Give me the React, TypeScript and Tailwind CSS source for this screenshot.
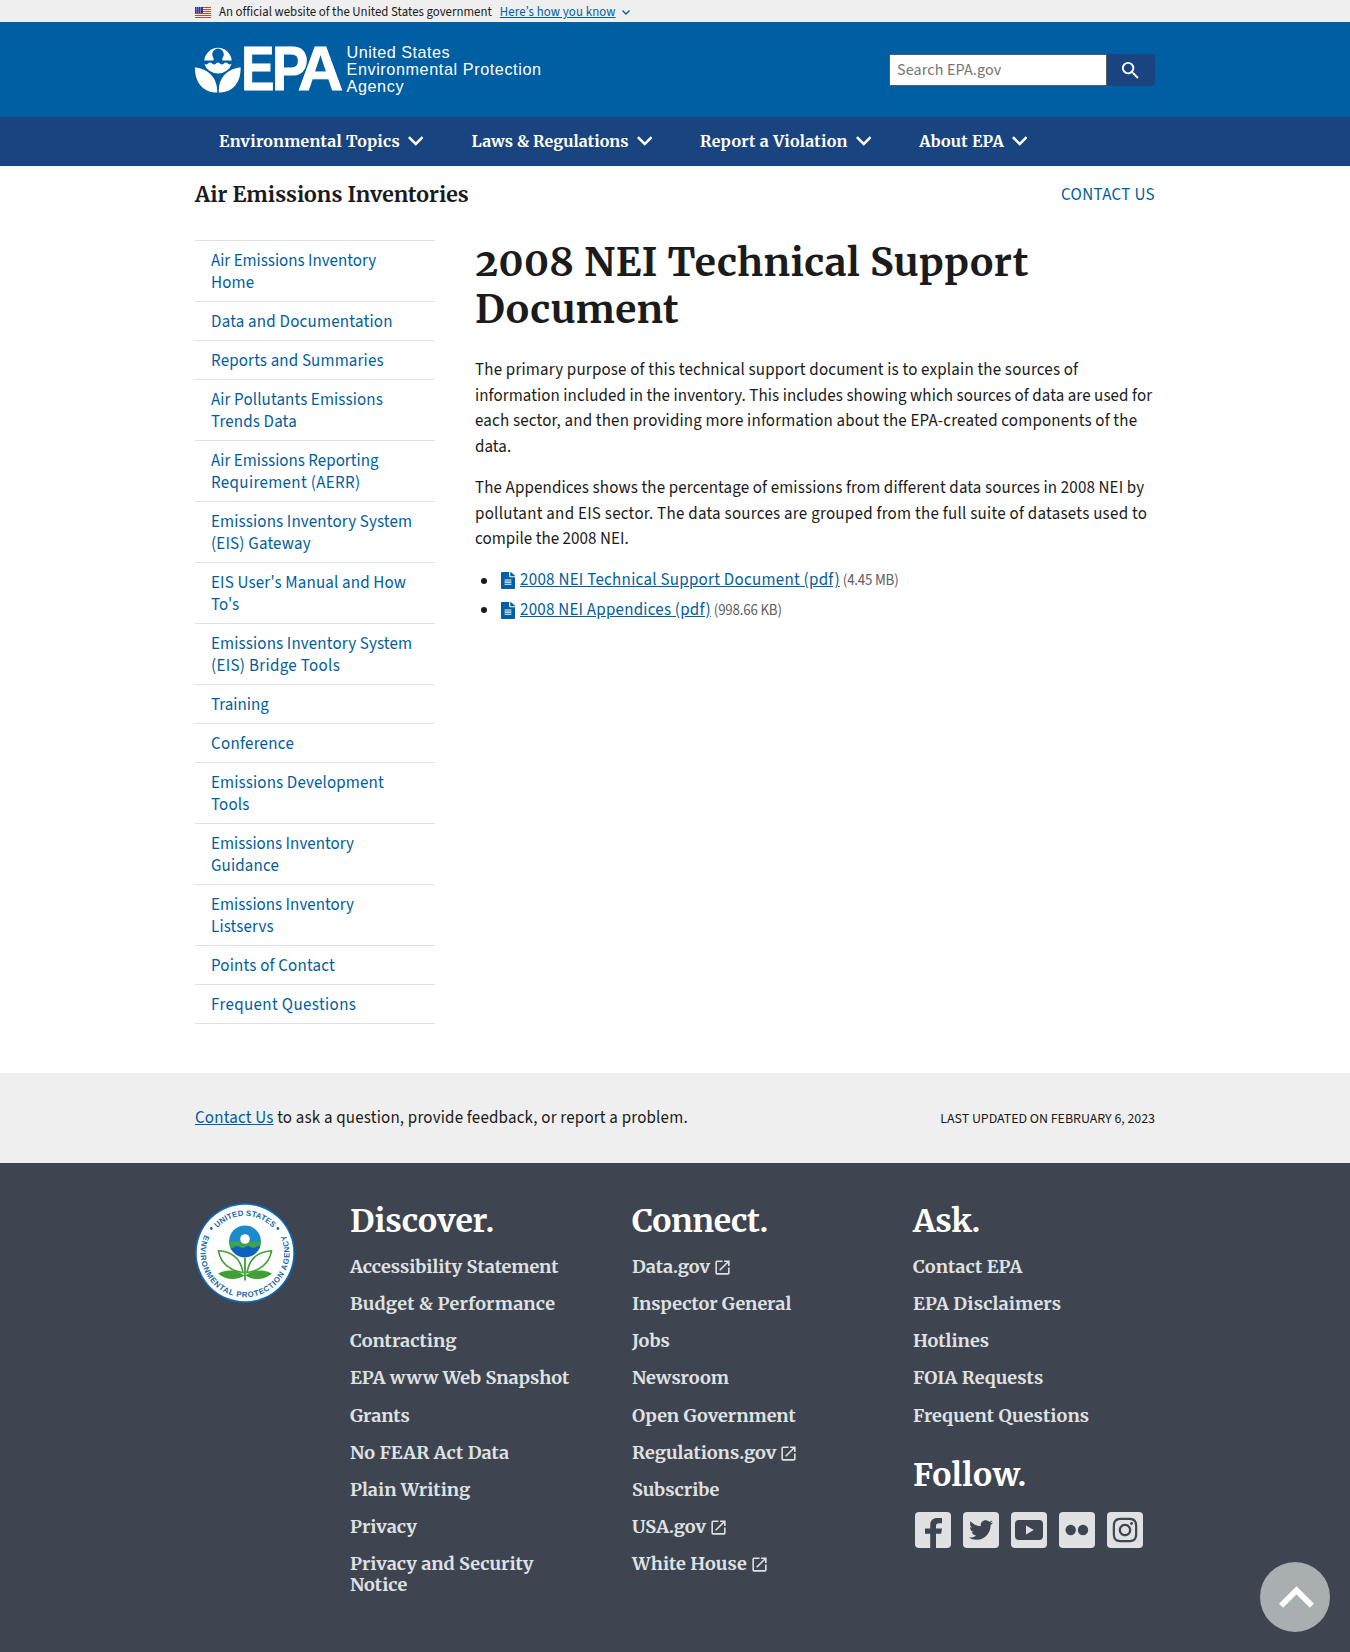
import type { ReactNode } from 'react';
import { FaFileAlt, FaInstagram, FaTwitter } from 'react-icons/fa';
import { MdLaunch, MdSearch } from 'react-icons/md';

const SERIF = "font-['Merriweather','DejaVu_Serif_Condensed',serif]";
const SANS = "font-['Source_Sans_Pro','Source_Sans_3','Noto_Sans',sans-serif]";

type Line = { text: string; cls: string };

const topics = [
  { label: 'Environmental Topics', cls: 'tracking-[0.27px]' },
  { label: 'Laws & Regulations', cls: 'tracking-[0.05px]' },
  { label: 'Report a Violation', cls: 'tracking-[0.29px]' },
  { label: 'About EPA', cls: 'tracking-[0.25px]' },
];

const sections: Line[][] = [
  [{ text: 'Air Emissions Inventory', cls: 'tracking-[0px]' }, { text: 'Home', cls: 'tracking-[0.15px]' }],
  [{ text: 'Data and Documentation', cls: 'tracking-[0.22px]' }],
  [{ text: 'Reports and Summaries', cls: 'tracking-[0.16px]' }],
  [{ text: 'Air Pollutants Emissions', cls: 'tracking-[0.12px]' }, { text: 'Trends Data', cls: 'tracking-[0.15px]' }],
  [{ text: 'Air Emissions Reporting', cls: 'tracking-[0.02px]' }, { text: 'Requirement (AERR)', cls: 'tracking-[0.35px]' }],
  [{ text: 'Emissions Inventory System', cls: 'tracking-[0.14px]' }, { text: '(EIS) Gateway', cls: 'tracking-[0.2px]' }],
  [{ text: "EIS User's Manual and How", cls: 'tracking-[0.17px]' }, { text: "To's", cls: 'tracking-[0.15px]' }],
  [{ text: 'Emissions Inventory System', cls: 'tracking-[0.14px]' }, { text: '(EIS) Bridge Tools', cls: 'tracking-[0.32px]' }],
  [{ text: 'Training', cls: 'tracking-[0px]' }],
  [{ text: 'Conference', cls: 'tracking-[0.27px]' }],
  [{ text: 'Emissions Development', cls: 'tracking-[0.14px]' }, { text: 'Tools', cls: 'tracking-[0.15px]' }],
  [{ text: 'Emissions Inventory', cls: 'tracking-[0.02px]' }, { text: 'Guidance', cls: 'tracking-[0.15px]' }],
  [{ text: 'Emissions Inventory', cls: 'tracking-[0.02px]' }, { text: 'Listservs', cls: 'tracking-[0.15px]' }],
  [{ text: 'Points of Contact', cls: 'tracking-[0.19px]' }],
  [{ text: 'Frequent Questions', cls: 'tracking-[0.37px]' }],
];

const purpose: Line[] = [
  { text: 'The primary purpose of this technical support document is to explain the sources of', cls: 'tracking-[0.18px]' },
  { text: 'information included in the inventory. This includes showing which sources of data are used for', cls: 'tracking-[0.085px]' },
  { text: 'each sector, and then providing more information about the EPA-created components of the', cls: 'tracking-[0.175px]' },
  { text: 'data.', cls: 'tracking-[0.08px]' },
];

const appendices: Line[] = [
  { text: 'The Appendices shows the percentage of emissions from different data sources in 2008 NEI by', cls: 'tracking-[0.135px]' },
  { text: 'pollutant and EIS sector. The data sources are grouped from the full suite of datasets used to', cls: 'tracking-[0.26px]' },
  { text: 'compile the 2008 NEI.', cls: 'tracking-[0.05px]' },
];

type FooterLink = { label: string; external?: boolean; cls?: string };

const discover: FooterLink[] = [
  { label: 'Accessibility Statement' },
  { label: 'Budget & Performance', cls: 'tracking-[0.2px]' },
  { label: 'Contracting' },
  { label: 'EPA www Web Snapshot', cls: 'tracking-[0.06px]' },
  { label: 'Grants' },
  { label: 'No FEAR Act Data', cls: 'tracking-[0.1px]' },
  { label: 'Plain Writing', cls: 'tracking-[0.08px]' },
  { label: 'Privacy' },
  { label: 'Privacy and Security Notice' },
];

const connect: FooterLink[] = [
  { label: 'Data.gov', external: true },
  { label: 'Inspector General' },
  { label: 'Jobs' },
  { label: 'Newsroom' },
  { label: 'Open Government' },
  { label: 'Regulations.gov', external: true },
  { label: 'Subscribe' },
  { label: 'USA.gov', external: true },
  { label: 'White House', external: true, cls: 'tracking-[0.1px]' },
];

const ask: FooterLink[] = [
  { label: 'Contact EPA', cls: 'tracking-[0.1px]' },
  { label: 'EPA Disclaimers', cls: 'tracking-[0.18px]' },
  { label: 'Hotlines' },
  { label: 'FOIA Requests', cls: 'tracking-[0.06px]' },
  { label: 'Frequent Questions', cls: 'tracking-[0.08px]' },
];

function Chevron({ className }: { className: string }) {
  return (
    <svg viewBox="6 8.59 12 7.41" className={className} fill="currentColor" aria-hidden="true">
      <path d="M16.59 8.59 12 13.17 7.41 8.59 6 10l6 6 6-6z" />
    </svg>
  );
}

function Flag() {
  return (
    <svg viewBox="0 0 16 11" className="h-[11px] w-4" aria-hidden="true">
      <rect width="16" height="11" fill="#fff" />
      {[0, 2, 4, 6, 8, 10].map((y) => (
        <rect key={y} y={y} width="16" height="1" fill="#db3e1f" />
      ))}
      <rect width="8" height="6" fill="#1e33b1" />
      {[1, 3, 5].map((y) =>
        [1, 3, 5].map((x) => <rect key={`${x}-${y}`} x={x} y={y - 0.5} width="1" height="1" fill="#fff" opacity="0.75" />),
      )}
    </svg>
  );
}

function EpaLogo() {
  return (
    <svg viewBox="0 -16 350 84" className="h-[84px] w-[350px]" role="img" aria-label="EPA home">
      <g fill="#fff">
        <path d="M9.2 16.600a13.900 14.500 0 0 1 27.600 0H27.400v-2.400a5.800 5.800 0 1 0-8.800 0v2.400z" />
        <path d="M9.2 19.500q2 2 3.940 0t3.940 0t3.940 0t3.940 0t3.940 0t3.940 0t3.940 0A14 14 0 0 1 23 29.500A14 14 0 0 1 9.200 19.500z" />
        <path d="M0 23.200C13 25 22.500 33 22.200 48.500C8 48.500-.5 38 0 23.200z" />
        <path d="M45.600 23.200C32.600 25 23.100 33 23.800 48.500C38 48.500 46.100 38 45.600 23.200z" />
        <g fontFamily="'Liberation Sans', Arial, sans-serif" fontWeight="700" fontSize="63" stroke="#fff" strokeWidth="1">
          <text transform="translate(46.300 46.300) scale(.79 1)">E</text>
          <text transform="translate(77 46.300) scale(.86 1)">P</text>
          <text transform="translate(102.800 46.300) scale(1 1)">A</text>
        </g>
        <g fontFamily="'Liberation Sans', Arial, sans-serif" fontSize="16.200">
          <text x="151.500" y="14" textLength="103">United States</text>
          <text x="151.500" y="30.800" textLength="194.500">Environmental Protection</text>
          <text x="151.500" y="47.600" textLength="57">Agency</text>
        </g>
      </g>
    </svg>
  );
}

function Seal() {
  return (
    <svg viewBox="0 0 100 100" className="size-[100px]" role="img" aria-label="United States Environmental Protection Agency seal">
      <defs>
        <path id="seal-top" d="M12.800 50A37.200 37.200 0 0 1 87.200 50" />
        <path id="seal-bottom" d="M10.800 29.100A44.400 44.400 0 1 0 89.200 29.100" />
        <clipPath id="seal-bloom">
          <circle cx="50" cy="38.500" r="16" />
        </clipPath>
      </defs>
      <circle cx="50" cy="50" r="50" fill="#0b6bb8" />
      <circle cx="50" cy="50" r="48.300" fill="#fff" />
      <g fill="#1668ab" fontFamily="'Liberation Sans', Arial, sans-serif" fontWeight="700" fontSize="7.800">
        <text textAnchor="middle">
          <textPath href="#seal-top" startOffset="50%" textLength="62">UNITED STATES</textPath>
        </text>
        <text textAnchor="middle">
          <textPath href="#seal-bottom" startOffset="50%" textLength="176">ENVIRONMENTAL PROTECTION AGENCY</textPath>
        </text>
      </g>
      <circle cx="16.300" cy="25.500" r="1.400" fill="#1668ab" />
      <circle cx="82.900" cy="25.500" r="1.400" fill="#1668ab" />
      <g clipPath="url(#seal-bloom)">
        <rect x="34" y="22" width="32" height="18" fill="#1c8bcb" />
        <rect x="34" y="38.500" width="32" height="7" fill="#3fa34d" />
        <path d="M34 44q2.700 1.800 5.400 0t5.400 0t5.400 0t5.400 0t5.400 0t5.400 0V56H34z" fill="#0d62bd" />
      </g>
      <circle cx="50" cy="36" r="4.800" fill="#fff" />
      <g fill="none" stroke="#3fa034" strokeWidth="1.600">
        <path d="M50 54.500V77.500" strokeWidth="1.800" />
        <path d="M23.500 47.800C36 48.500 45.500 55 48 69.500C35 68 25.500 60 23.500 47.800z" />
        <path d="M76.500 47.800C64 48.500 54.500 55 52 69.500C65 68 74.500 60 76.500 47.800z" />
      </g>
      <path d="M23 70.500C32 65.500 43 67 49.500 72.500C42 77.500 31 77.500 23 70.500z" fill="#3fa034" />
      <path d="M77 70.500C68 65.500 57 67 50.500 72.500C58 77.500 69 77.500 77 70.500z" fill="#3fa034" />
    </svg>
  );
}

function Paragraph({ lines }: { lines: Line[] }) {
  return (
    <p>
      {lines.map((line) => (
        <span key={line.text} className={`${line.cls} block whitespace-nowrap`}>
          {line.text}{' '}
        </span>
      ))}
    </p>
  );
}

function ResourceLink({ label, size, cls }: { label: string; size: string; cls: string }) {
  return (
    <li className="flex h-[29.600px] items-baseline">
      <span className="mr-[14px] flex w-[12px] justify-end self-start pt-[9.500px]">
        <span className="size-[6px] rounded-full bg-[#1b1b1b]" />
      </span>
      <FaFileAlt preserveAspectRatio="none" className="mt-[4px] mr-[5px] h-[17px] w-[14px] self-start text-[#005ea2]" />
      <a href="#" className={`${cls} text-[#005ea2] underline`}>
        {label}
      </a>
      <span className="ml-[3px] text-[14.880px] tracking-[-0.2px] text-[#5f6063]">({size})</span>
    </li>
  );
}

function FooterColumn({
  title,
  titleClass,
  links,
  className,
  children,
}: {
  title: string;
  titleClass: string;
  links: FooterLink[];
  className: string;
  children?: ReactNode;
}) {
  return (
    <div className={className}>
      <h2 className={`${titleClass} text-[32px] leading-[38px] font-bold text-white`}>{title}</h2>
      <ul className="mt-[15.500px] flex flex-col gap-[16.200px]">
        {links.map((link) => (
          <li key={link.label} className={`${link.cls ?? ''} text-[18.080px] leading-[21px] font-bold text-[#dfe1e2]`}>
            <a href="#">
              {link.label}
              {link.external && <MdLaunch className="-mt-[2px] ml-[3px] inline size-[19px] align-[-4px]" />}
            </a>
          </li>
        ))}
      </ul>
      {children}
    </div>
  );
}

function SocialTile({ label, children }: { label: string; children: ReactNode }) {
  return (
    <a href="#" aria-label={label} className="flex size-9 items-center justify-center rounded-[4px] bg-[#dfe1e2] text-[#3e4450]">
      {children}
    </a>
  );
}

export default function App() {
  return (
    <div className={`${SANS} min-h-[1652px] bg-white text-[16.960px] text-[#1b1b1b]`}>
      <div className="h-[22px] bg-[#efefef]">
        <div className="mx-auto flex h-6 w-[960px] items-center text-[12.800px] leading-[22px]">
          <Flag />
          <span className="ml-2 tracking-[0.02px]">An official website of the United States government</span>
          <a href="#" className="ml-2 tracking-[0.13px] text-[#005ea2] underline">
            Here’s how you know
          </a>
          <Chevron className="ml-[6px] h-[5px] w-2 text-[#005ea2]" />
        </div>
      </div>

      <header>
        <div className="h-[95px] bg-[#005ea2]">
          <div className="mx-auto flex h-full w-[960px] items-start justify-between pt-[6px]">
            <EpaLogo />
            <form className="mt-[26px] flex h-[32px]">
              <input
                type="search"
                placeholder="Search EPA.gov"
                className="h-8 w-[218px] border border-[#565c65] bg-white px-[7px] text-[16px] tracking-[0.15px] placeholder:text-[#757575]"
              />
              <button type="button" aria-label="Search" className="flex h-8 w-12 items-center justify-center rounded-r bg-[#1a4480] pr-[2px] text-white">
                <MdSearch className="size-[23px]" />
              </button>
            </form>
          </div>
        </div>
        <nav className="h-[49px] bg-[#1a4480]">
          <ul className={`${SERIF} mx-auto flex h-[47px] w-[960px] items-center gap-[48px] pl-6 text-[16px] font-bold text-white`}>
            {topics.map((topic) => (
              <li key={topic.label} className="flex items-center gap-2">
                <span className={`${topic.cls} whitespace-nowrap`}>{topic.label}</span>
                <Chevron className="h-[10px] w-[15.500px]" />
              </li>
            ))}
          </ul>
        </nav>
      </header>

      <main className="mx-auto h-[907px] w-[960px]">
        <div className="flex h-[74px] justify-between pt-[14px] leading-[29px]">
          <h2 className={`${SERIF} text-[21.280px] font-bold tracking-[0.07px]`}>Air Emissions Inventories</h2>
          <a href="#" className="pt-px tracking-[0.35px] text-[#005ea2]">
            CONTACT US
          </a>
        </div>
        <div className="flex">
          <nav className="w-[240px] shrink-0">
            <ul className="border-b border-[#dfe1e2]">
              {sections.map((lines) => (
                <li key={lines.map((line) => line.text).join(' ')} className="border-t border-[#dfe1e2] px-4 pt-[9px] pb-[7.040px] leading-[22px]">
                  <a href="#" className="text-[#005ea2]">
                    {lines.map((line) => (
                      <span key={line.text} className={`${line.cls} block whitespace-nowrap`}>
                        {line.text}{' '}
                      </span>
                    ))}
                  </a>
                </li>
              ))}
            </ul>
          </nav>
          <article className="ml-10 w-[680px]">
            <h1 className={`${SERIF} text-[39.040px] leading-[46.850px] font-bold [font-variant-numeric:oldstyle-nums]`}>
              <span className="block tracking-[0.53px]">2008 NEI Technical Support </span>
              <span className="block tracking-[0.3px]">Document</span>
            </h1>
            <div className="mt-[24.500px] flex flex-col gap-[15.500px] leading-[25.600px]">
              <Paragraph lines={purpose} />
              <Paragraph lines={appendices} />
              <ul>
                <ResourceLink label="2008 NEI Technical Support Document (pdf)" size="4.45 MB" cls="tracking-[0.27px]" />
                <ResourceLink label="2008 NEI Appendices (pdf)" size="998.66 KB" cls="tracking-[0.23px]" />
              </ul>
            </div>
          </article>
        </div>
      </main>

      <div className="h-[90px] bg-[#efefef]">
        <div className="mx-auto flex h-[90px] w-[960px] items-center justify-between">
          <p className="pt-px tracking-[0.19px]">
            <a href="#" className="text-[#005ea2] underline">
              Contact Us
            </a>{' '}
            to ask a question, provide feedback, or report a problem.
          </p>
          <p className="pt-[2px] text-[13.900px] tracking-[-0.02px]">LAST UPDATED ON FEBRUARY 6, 2023</p>
        </div>
      </div>

      <footer className="h-[489px] bg-[#3e4450] pt-10">
        <div className={`${SERIF} mx-auto flex w-[960px] items-start`}>
          <Seal />
          <FooterColumn title="Discover." titleClass="" links={discover} className="-mt-[0.600px] ml-[55px] w-[282px] pr-10" />
          <FooterColumn title="Connect." titleClass="tracking-[-0.4px]" links={connect} className="-mt-[0.600px] w-[281px]" />
          <FooterColumn title="Ask." titleClass="tracking-[-0.3px]" links={ask} className="-mt-[0.600px] w-[242px]">
            <h2 className="mt-[30.500px] text-[32px] leading-[38px] font-bold tracking-[0.4px] text-white">Follow.</h2>
            <div className="mt-[17.500px] ml-[2px] flex gap-3">
              <SocialTile label="Facebook">
                <svg viewBox="0 0 36 36" className="size-9" fill="currentColor">
                  <path d="M15.200 36V21.700H10V16.400H15.200V13.200C15.200 8.500 18 6 22.500 6H27V11.200H24C22 11.200 21 12 21 14V16.400H27L26.200 21.700H21V36z" />
                </svg>
              </SocialTile>
              <SocialTile label="Twitter">
                <FaTwitter className="size-6" />
              </SocialTile>
              <SocialTile label="YouTube">
                <svg viewBox="0 0 36 36" className="size-9">
                  <rect x="4" y="8" width="28" height="20" rx="4" fill="#3e4450" />
                  <path d="M15 13.500V22.500L22.800 18z" fill="#dfe1e2" />
                </svg>
              </SocialTile>
              <SocialTile label="Flickr">
                <svg viewBox="0 0 36 36" className="size-9" fill="currentColor">
                  <circle cx="11.700" cy="18" r="5.200" />
                  <circle cx="24" cy="18" r="5.200" />
                </svg>
              </SocialTile>
              <SocialTile label="Instagram">
                <FaInstagram className="size-[28px]" />
              </SocialTile>
            </div>
          </FooterColumn>
        </div>
      </footer>

      <a href="#" aria-label="Back to top" className="fixed right-5 bottom-5 flex size-[70px] items-center justify-center rounded-full bg-[#a9aeb1] text-white">
        <Chevron className="ml-[2px] h-[22px] w-[35px] rotate-180" />
      </a>
    </div>
  );
}
